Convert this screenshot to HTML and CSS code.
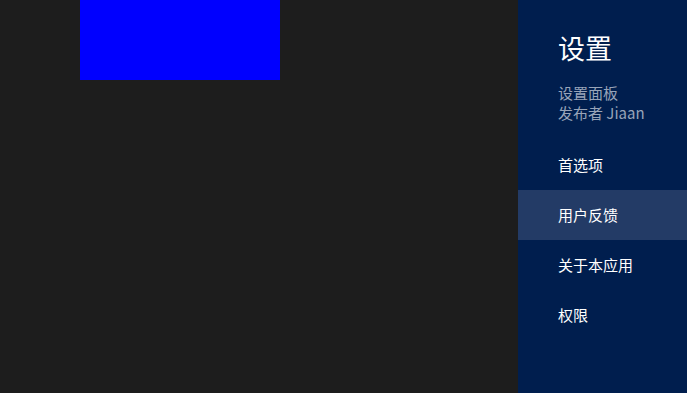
FILE: index.html
```html
<!DOCTYPE html>
<html lang="zh-CN">
<head>
<meta charset="utf-8">
<link rel="stylesheet" href="styles.css">
</head>
<body>
<div class="app">
  <main class="content">
    <div class="tile"></div>
  </main>
  <aside class="settings">
    <h1 class="title">设置</h1>
    <div class="meta">
      <div>设置面板</div>
      <div>发布者 Jiaan</div>
    </div>
    <ul class="menu">
      <li class="item">首选项</li>
      <li class="item active">用户反馈</li>
      <li class="item">关于本应用</li>
      <li class="item">权限</li>
    </ul>
  </aside>
</div>
</body>
</html>
```
FILE: styles.css
```css
html, body {
  margin: 0;
  padding: 0;
  height: 100%;
  overflow: hidden;
}
body {
  font-family: "Noto Sans CJK SC", "Noto Sans", sans-serif;
  background: #1d1d1d;
}
.app {
  display: flex;
  height: 393px;
}
.content {
  flex: 1;
  padding-left: 80px;
}
.tile {
  width: 200px;
  height: 80px;
  background: #0000ff;
}
.settings {
  width: 169px;
  background: #001e4e;
  color: #ffffff;
  display: flex;
  flex-direction: column;
}
.title {
  margin: 0;
  padding: 30px 0 0 40px;
  font-size: 27px;
  font-weight: 400;
  line-height: 36px;
}
.meta {
  margin-top: 17px;
  padding-left: 40px;
  color: #98a4b9;
  font-size: 15px;
  line-height: 20px;
}
.menu {
  list-style: none;
  margin: 17px 0 0;
  padding: 0;
}
.item {
  height: 50px;
  line-height: 50px;
  padding-left: 40px;
  font-size: 15px;
}
.item.active {
  background: #233b66;
}
```
